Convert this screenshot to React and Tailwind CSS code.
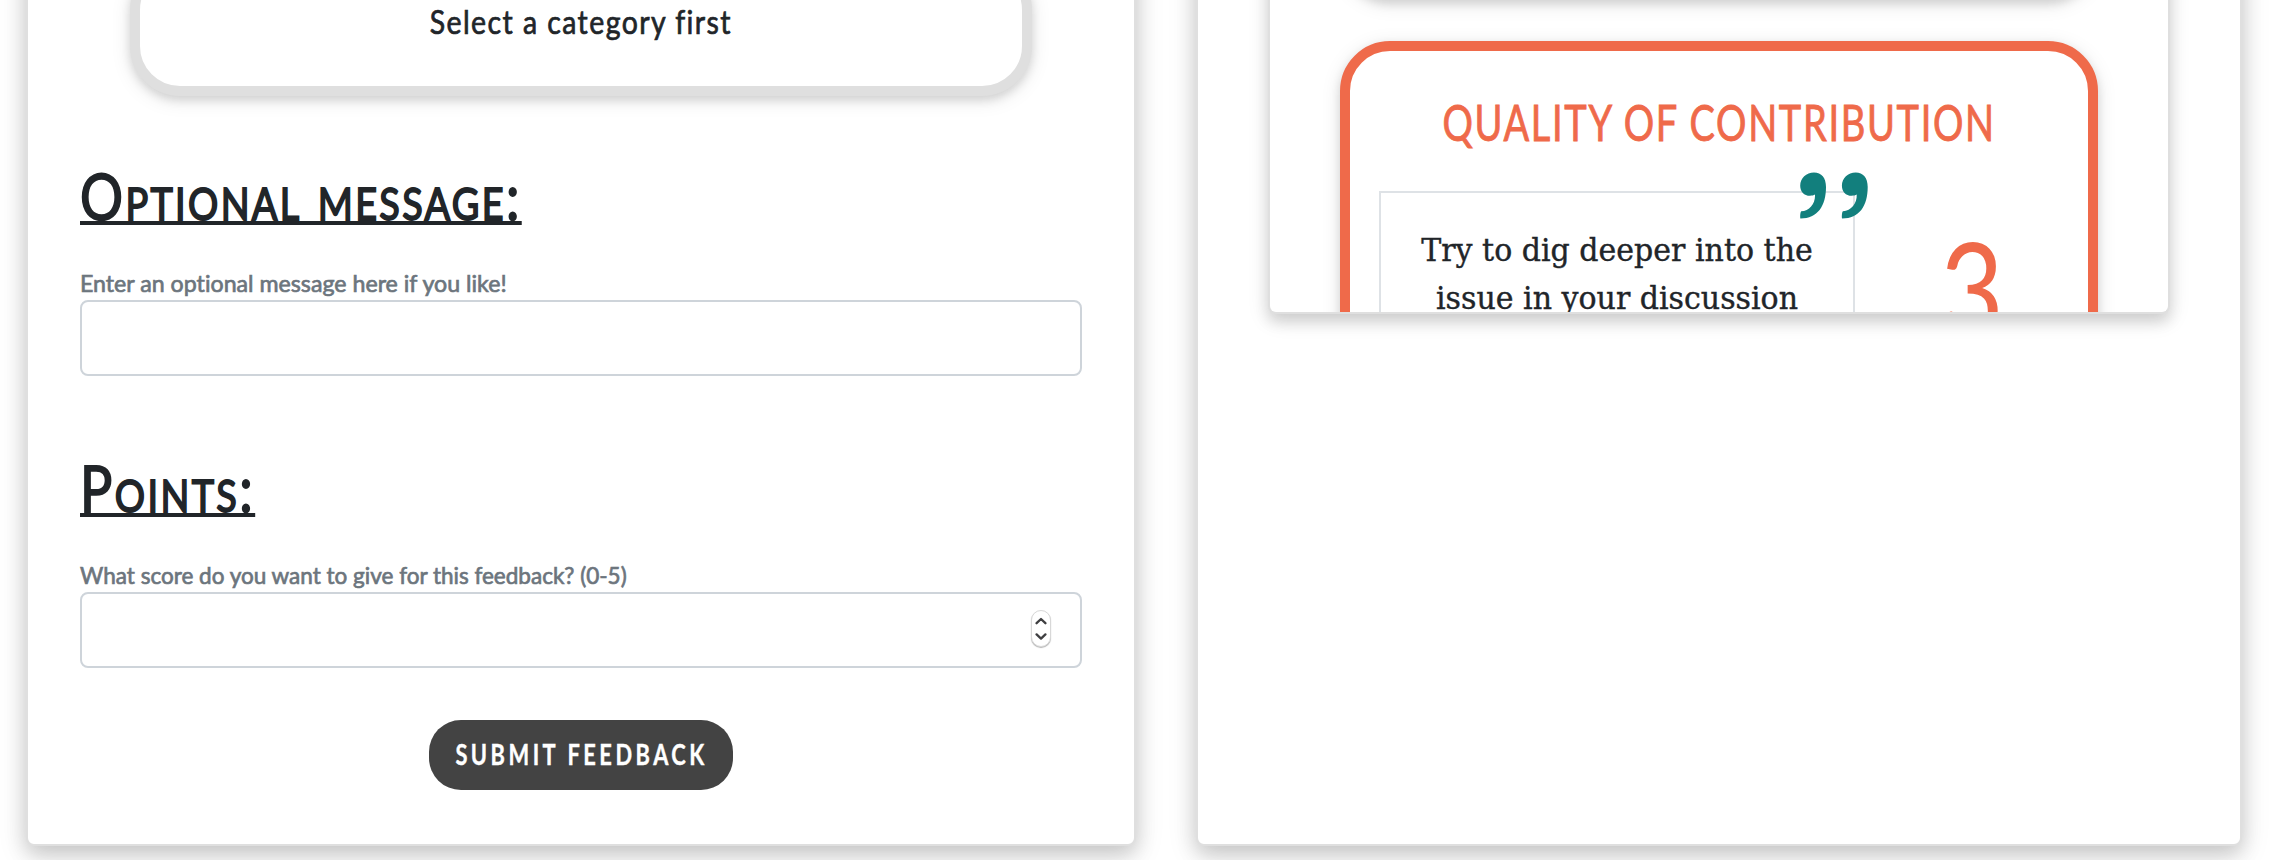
import React from "react";

const cardShadow = "shadow-[0_8px_20px_rgba(0,0,0,0.15),0_8px_30px_rgba(0,0,0,0.12)]";
const innerCardShadow = "shadow-[0_8px_14px_rgba(0,0,0,0.12),0_6px_22px_rgba(0,0,0,0.11)]";
const boxShadow = "shadow-[0_4px_10px_rgba(0,0,0,0.12),0_4px_20px_rgba(0,0,0,0.10)]";

function Field({ title, titleScale, label, labelScale, children }) {
  return (
    <section className="flex flex-col items-start">
      <h2
        className={`${titleScale} h-[76px] origin-left whitespace-nowrap text-[64px] leading-[78px] [font-variant:small-caps] underline decoration-[4px] underline-offset-[1px] [text-decoration-skip-ink:none] [-webkit-text-stroke:1.8px_#212529]`}
      >
        {title}
      </h2>
      <label
        className={`${labelScale} mt-8 h-[35px] origin-left whitespace-nowrap text-2xl leading-[35px] text-[#6c757d] [font-variant-ligatures:none] [-webkit-text-stroke:0.7px_#6c757d]`}
      >
        {label}
      </label>
      <div className="flex h-[76px] w-full items-center justify-end rounded-lg border-2 border-[#ced4da] bg-white pr-[29px]">
        {children}
      </div>
    </section>
  );
}

function Stepper() {
  return (
    <div className="mb-[3px] flex h-[37px] w-5 flex-col items-center justify-center rounded-full border border-[#d8d8d8] bg-white shadow-[0_1px_1px_rgba(0,0,0,0.3)]">
      <svg width="12" height="26" viewBox="0 0 12 26" fill="none" stroke="#3f3f41" strokeWidth="2.3" strokeLinecap="round" strokeLinejoin="round">
        <path d="M1.6 7.2 6 3l4.4 4.2" />
        <path d="M1.6 18.4 6 22.6l4.4-4.2" />
      </svg>
    </div>
  );
}

const COMMA =
  "M14 0.5C21.5 0.5 26 5.8 26 15C26 34 17.5 46.5 0.6 46.5C-0.2 46.5 0.2 39.8 1.2 39.3C9.5 38.8 15.5 31.5 15 22.6C13.8 23.4 12 23.8 10 23.8C4 23.8 0.2 19.3 0.2 13.7C0.2 6.2 6.3 0.5 14 0.5Z";

function QuoteMark() {
  return (
    <svg className="absolute -right-[17px] -top-[21px]" width="70" height="48" viewBox="0 0 70 48" fill="#127f7d">
      <path d={COMMA} />
      <path transform="translate(41.7 0)" d={COMMA} />
    </svg>
  );
}

export default function App() {
  return (
    <main className="flex h-[860px] w-[2270px] items-start gap-[60px] overflow-hidden bg-white pl-[26px] font-['Lato',sans-serif] text-[#212529]">
      <div className={`-mt-10 h-[886px] w-[1110px] shrink-0 rounded-lg border-2 border-[#dfdfdf] bg-white px-[52px] pt-[38px] ${cardShadow}`}>
        <div className={`mx-auto -mt-10 flex h-[136px] w-[902px] justify-center rounded-[50px] border-[10px] border-[#dfdfdf] bg-white pt-8 ${boxShadow}`}>
          <p className="scale-x-[0.89] whitespace-nowrap text-[32px] leading-[40px] tracking-[1.6px] [-webkit-text-stroke:0.7px_#212529]">
            Select a category first
          </p>
        </div>
        <div className="mt-[61px] flex flex-col gap-[73px]">
          <Field
            title="Optional message:"
            titleScale="scale-x-[0.84] tracking-[2.8px]"
            label="Enter an optional message here if you like!"
            labelScale="scale-x-[0.966]"
          />
          <Field
            title="Points:"
            titleScale="scale-x-[0.84] tracking-[2.9px]"
            label="What score do you want to give for this feedback? (0-5)"
            labelScale="scale-x-[0.938]"
          >
            <Stepper />
          </Field>
        </div>
        <button className="mx-auto mt-[52px] flex h-[70px] w-[304px] items-center justify-center rounded-[32px] bg-[#434343] pb-[3px] text-[28px] font-bold leading-[34px] text-white">
          <span className="scale-x-[0.78] whitespace-nowrap pl-0.5 tracking-[4.5px] [-webkit-text-stroke:0.4px_white]">SUBMIT FEEDBACK</span>
        </button>
      </div>

      <div className={`-mt-10 h-[886px] w-[1046px] shrink-0 rounded-lg border-2 border-[#dfdfdf] bg-white px-[70px] ${cardShadow}`}>
        <div className={`h-[352px] overflow-hidden rounded-lg border-2 border-t-0 border-[#dfdfdf] bg-white px-[70px] ${innerCardShadow}`}>
          <div className={`-mt-[62px] h-[100px] w-full rounded-[50px] border-[10px] border-[#dfdfdf] bg-white ${boxShadow}`} />
          <div className={`mt-[41px] h-[500px] w-full rounded-[50px] border-[10px] border-[#ef6a4a] bg-white pl-[29px] pt-[41px] ${boxShadow}`}>
            <h3 className="-ml-[29px] h-[60px] text-center text-[50px] leading-[60px] text-[#ef6a4a] [-webkit-text-stroke:0.9px_#ef6a4a]">
              <span className="inline-block scale-x-[0.76] whitespace-nowrap tracking-[2.2px]">QUALITY OF CONTRIBUTION</span>
            </h3>
            <div className="mt-[39px] flex">
              <div className="relative h-[300px] w-[476px] border-2 border-[#dee2e6] pt-[33px] text-center font-['DejaVu_Serif',serif] text-[32px] leading-[48px] [-webkit-text-stroke:0.4px_#212529]">
                <QuoteMark />
                <p className="-mx-10 scale-x-[0.938]">
                  Try to dig deeper into the
                  <br />
                  issue in your discussion
                </p>
              </div>
              <div className="flex h-[150px] flex-1 justify-center pt-[22px] text-[131px] leading-[150px] text-[#ef6a4a]">
                <span className="inline-block scale-x-[0.84]">3</span>
              </div>
            </div>
          </div>
        </div>
      </div>
    </main>
  );
}
